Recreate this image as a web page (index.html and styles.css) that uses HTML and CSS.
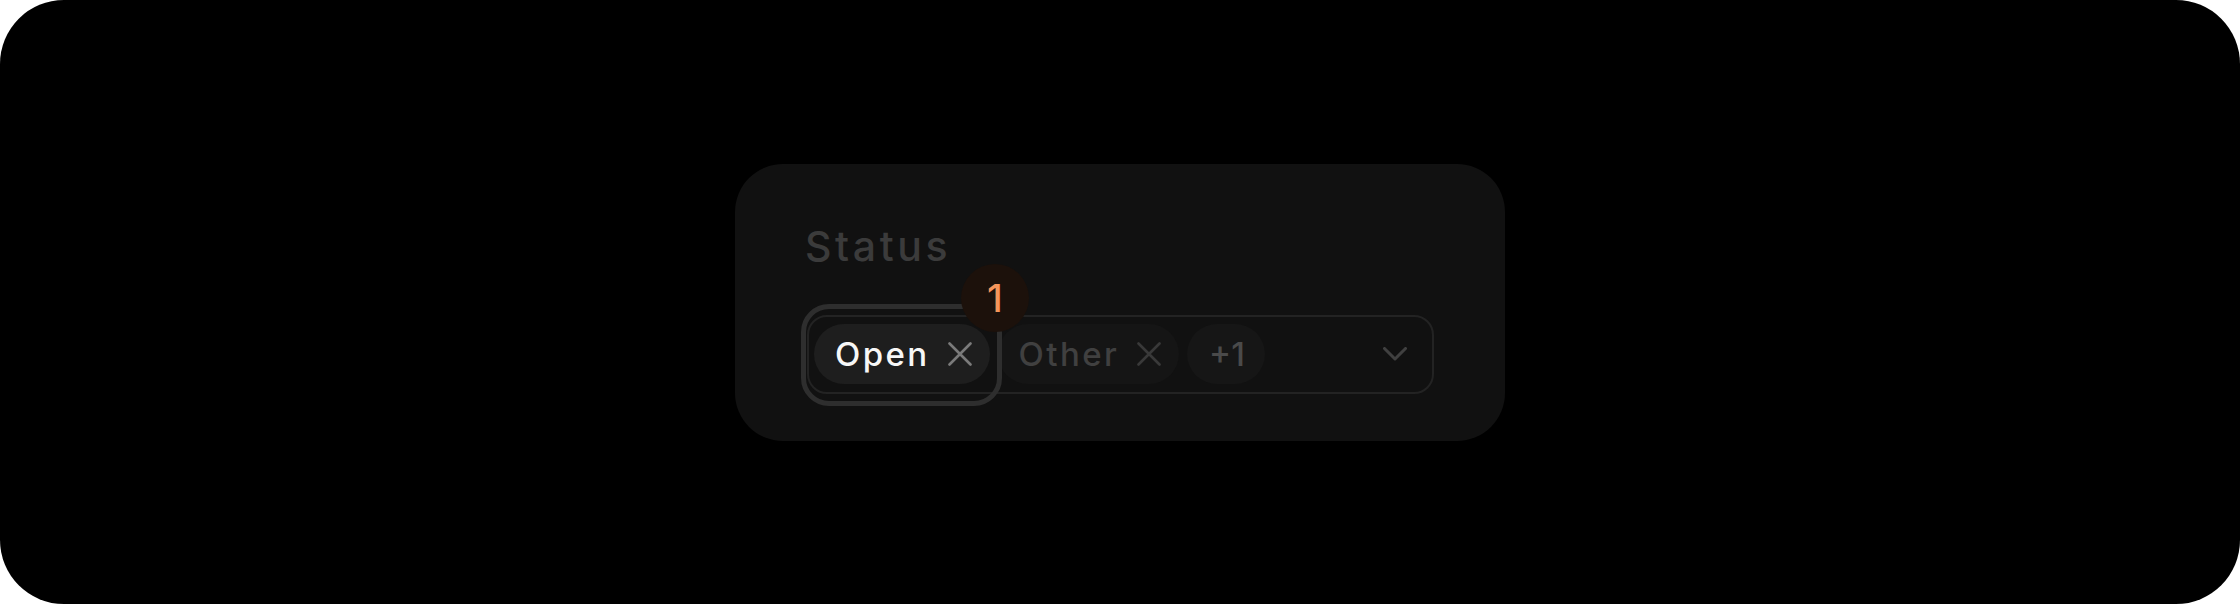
FILE: index.html
```html
<!DOCTYPE html>
<html lang="en">
<head>
<meta charset="utf-8">
<title>Status select</title>
<link rel="stylesheet" href="styles.css">
</head>
<body>
<div class="frame">
  <div class="card">
    <div class="label">Status</div>
    <div class="select">
      <div class="chip chip-active">
        <span class="chip-text">Open</span>
        <svg class="x" viewBox="0 0 24 24"><path d="M1.5 1.5L22.5 22.5M22.5 1.5L1.5 22.5"/></svg>
      </div>
      <div class="chip chip-muted">
        <span class="chip-text">Other</span>
        <svg class="x" viewBox="0 0 24 24"><path d="M1.5 1.5L22.5 22.5M22.5 1.5L1.5 22.5"/></svg>
      </div>
      <div class="chip chip-more"><span class="chip-text">+1</span></div>
      <svg class="chevron" viewBox="0 0 24 14"><path d="M1.5 1.5L12 12L22.5 1.5"/></svg>
      <div class="ring"></div>
      <div class="badge">1</div>
    </div>
  </div>
</div>
</body>
</html>
```
FILE: styles.css
```css
html, body {
  margin: 0;
  padding: 0;
  background: #ffffff;
}
.frame {
  width: 2240px;
  height: 604px;
  background: #000000;
  border-radius: 64px;
  display: flex;
  align-items: center;
  justify-content: center;
  font-family: "Inter", "Noto Sans", sans-serif;
}
.card {
  width: 770px;
  height: 277px;
  box-sizing: border-box;
  background: #111111;
  border-radius: 48px;
  padding: 57px 71px 0 72px;
}
.label {
  font-size: 41px;
  line-height: 50px;
  font-weight: 500;
  color: #3b3b3b;
  letter-spacing: 3.6px;
  margin-left: -2px;
}
.select {
  position: relative;
  margin-top: 44px;
  height: 79px;
  box-sizing: border-box;
  border: 2px solid #232323;
  border-radius: 20px;
  padding: 0 25px 0 5px;
  display: flex;
  align-items: center;
  gap: 8px;
}
.chip {
  height: 60px;
  border-radius: 30px;
  display: flex;
  align-items: center;
  gap: 20px;
  padding: 0 18px 0 21px;
  font-size: 33px;
  font-weight: 500;
  letter-spacing: 2.4px;
}
.chip-text {
  line-height: 1;
  margin-right: -2px;
}
.chip-active {
  background: #1e1e1e;
  color: #f7f7f7;
}
.chip-active .x path {
  stroke: #7a7a7a;
}
.chip-muted {
  background: #151515;
  color: #404040;
}
.chip-muted .x path {
  stroke: #393939;
}
.chip-more {
  background: #161616;
  color: #4a4a4a;
  padding: 0 22px;
  letter-spacing: 0;
}
.x {
  width: 24px;
  height: 24px;
  flex: none;
}
.x path {
  fill: none;
  stroke-width: 2.6;
  stroke-linecap: round;
}
.chevron {
  margin-left: auto;
  width: 24px;
  height: 14px;
  flex: none;
}
.chevron path {
  fill: none;
  stroke: #404040;
  stroke-width: 3;
  stroke-linecap: round;
  stroke-linejoin: round;
}
.ring {
  position: absolute;
  left: -8px;
  top: -13px;
  width: 201px;
  height: 102px;
  box-sizing: border-box;
  border: 5px solid #2e2e2e;
  border-radius: 28px;
}
.badge {
  position: absolute;
  left: 152px;
  top: -53px;
  width: 68px;
  height: 68px;
  border-radius: 50%;
  background: #1c110b;
  color: #f4955b;
  font-size: 38px;
  font-weight: 500;
  display: flex;
  align-items: center;
  justify-content: center;
  line-height: 1;
}
```
